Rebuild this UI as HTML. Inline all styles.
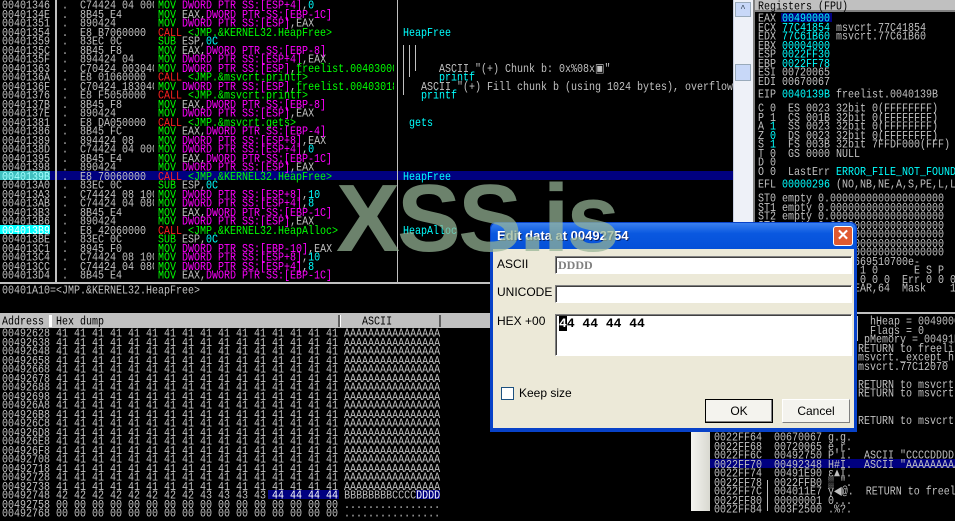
<!DOCTYPE html>
<html><head><meta charset="utf-8"><style>
*{margin:0;padding:0;box-sizing:border-box}
body{width:955px;height:511px;background:#000;overflow:hidden;position:relative;font-family:"Liberation Mono",monospace;font-size:10px;color:#c0c0c0}
pre{position:absolute;font-family:"Liberation Mono",monospace;font-size:10px;line-height:7.5px;padding-top:2px;white-space:pre;transform:scaleY(1.2);transform-origin:0 0}
.g{color:#00ff00}.m{color:#ff00ff}.r{color:#ff2020}.c{color:#00ffff}.w{color:#c0c0c0}
.abs{position:absolute}
.vl{position:absolute;background:#c0c0c0;width:2px}
.sans{font-family:"Liberation Sans",sans-serif}
</style></head><body>

<!-- disassembly -->
<div class="abs" style="left:0;top:171px;width:735px;height:9px;background:#000080"></div>
<div class="abs" style="left:0;top:171px;width:50px;height:9px;background:#40c0c0"></div>
<div class="abs" style="left:0;top:225px;width:50px;height:9px;background:#00ffff"></div>
<div class="vl" style="left:55px;top:0;height:282px"></div>
<div class="vl" style="left:397px;top:0;height:282px;width:1px"></div>
<div class="vl" style="left:403px;top:45px;height:50px;width:1px"></div>
<div class="vl" style="left:409px;top:45px;height:32px;width:1px"></div>
<div class="vl" style="left:415px;top:45px;height:26px;width:1px"></div>
<pre style="left:2px;top:0">00401346
0040134E
00401351
00401354
00401359
0040135C
0040135F
00401363
0040136A
0040136F
00401376
0040137B
0040137E
00401381
00401386
00401389
0040138D
00401395
00401398
<span style="color:#a0ffff">0040139B</span>
004013A0
004013A3
004013AB
004013B3
004013B6
<span style="color:#fff">004013B9</span>
004013BE
004013C1
004013C4
004013CC
004013D4</pre>
<pre style="left:62px;top:0;width:92px;overflow:hidden">.  C74424 04 0000
.  8B45 E4
.  890424
.  E8 B7060000
.  83EC 0C
.  8B45 F8
.  894424 04
.  C70424 003040
.  E8 01060000
.  C70424 183040
.  E8 F5050000
.  8B45 F8
.  890424
.  E8 DA050000
.  8B45 FC
.  894424 08
.  C74424 04 0000
.  8B45 E4
.  890424
.  E8 70060000
.  83EC 0C
.  C74424 08 1000
.  C74424 04 0800
.  8B45 E4
.  890424
.  E8 42060000
.  83EC 0C
.  8945 F0
.  C74424 08 1000
.  C74424 04 0800
.  8B45 E4</pre>
<pre style="left:158px;top:0;width:236px;overflow:hidden"><span class="g">MOV</span> <span class="m">DWORD PTR SS:[ESP+4]</span>,<span class="c">0</span>
<span class="g">MOV</span> EAX,<span class="m">DWORD PTR SS:[EBP-1C]</span>
<span class="g">MOV</span> <span class="m">DWORD PTR SS:[ESP]</span>,EAX
<span class="r">CALL</span> <span class="g">&lt;JMP.&amp;KERNEL32.HeapFree&gt;</span>
<span class="g">SUB</span> ESP,<span class="c">0C</span>
<span class="g">MOV</span> EAX,<span class="m">DWORD PTR SS:[EBP-8]</span>
<span class="g">MOV</span> <span class="m">DWORD PTR SS:[ESP+4]</span>,EAX
<span class="g">MOV</span> <span class="m">DWORD PTR SS:[ESP]</span>,<span class="g">freelist.00403000</span>
<span class="r">CALL</span> <span class="g">&lt;JMP.&amp;msvcrt.printf&gt;</span>
<span class="g">MOV</span> <span class="m">DWORD PTR SS:[ESP]</span>,<span class="g">freelist.00403018</span>
<span class="r">CALL</span> <span class="g">&lt;JMP.&amp;msvcrt.printf&gt;</span>
<span class="g">MOV</span> EAX,<span class="m">DWORD PTR SS:[EBP-8]</span>
<span class="g">MOV</span> <span class="m">DWORD PTR SS:[ESP]</span>,EAX
<span class="r">CALL</span> <span class="g">&lt;JMP.&amp;msvcrt.gets&gt;</span>
<span class="g">MOV</span> EAX,<span class="m">DWORD PTR SS:[EBP-4]</span>
<span class="g">MOV</span> <span class="m">DWORD PTR SS:[ESP+8]</span>,EAX
<span class="g">MOV</span> <span class="m">DWORD PTR SS:[ESP+4]</span>,<span class="c">0</span>
<span class="g">MOV</span> EAX,<span class="m">DWORD PTR SS:[EBP-1C]</span>
<span class="g">MOV</span> <span class="m">DWORD PTR SS:[ESP]</span>,EAX
<span class="r">CALL</span> <span class="g">&lt;JMP.&amp;KERNEL32.HeapFree&gt;</span>
<span class="g">SUB</span> ESP,<span class="c">0C</span>
<span class="g">MOV</span> <span class="m">DWORD PTR SS:[ESP+8]</span>,<span class="c">10</span>
<span class="g">MOV</span> <span class="m">DWORD PTR SS:[ESP+4]</span>,<span class="c">8</span>
<span class="g">MOV</span> EAX,<span class="m">DWORD PTR SS:[EBP-1C]</span>
<span class="g">MOV</span> <span class="m">DWORD PTR SS:[ESP]</span>,EAX
<span class="r">CALL</span> <span class="g">&lt;JMP.&amp;KERNEL32.HeapAlloc&gt;</span>
<span class="g">SUB</span> ESP,<span class="c">0C</span>
<span class="g">MOV</span> <span class="m">DWORD PTR SS:[EBP-10]</span>,EAX
<span class="g">MOV</span> <span class="m">DWORD PTR SS:[ESP+8]</span>,<span class="c">10</span>
<span class="g">MOV</span> <span class="m">DWORD PTR SS:[ESP+4]</span>,<span class="c">8</span>
<span class="g">MOV</span> EAX,<span class="m">DWORD PTR SS:[EBP-1C]</span></pre>
<pre style="left:403px;top:0;width:330px;overflow:hidden">
 
 
 
<span class="c">HeapFree</span>
 
 
 
      ASCII "(+) Chunk b: 0x%08x&#9635;"
      <span class="c">printf</span>
   ASCII "(+) Fill chunk b (using 1024 bytes), overflowing
   <span class="c">printf</span>
 
 
 <span class="c">gets</span>
 
 
 
 
 
<span class="c">HeapFree</span>
 
 
 
 
 
<span class="c">HeapAlloc</span></pre>
<!-- disasm scrollbar -->
<div class="abs" style="left:733px;top:0;width:20px;height:282px;background:#eef1f8;border-left:1px solid #c8cfe0"></div>
<div class="abs" style="left:735px;top:2px;width:16px;height:15px;background:#c8d8f8;border:1px solid #9ab;color:#345;font-size:9px;text-align:center;line-height:12px">&#94;</div>
<div class="abs" style="left:735px;top:64px;width:16px;height:17px;background:#c8d8f8;border:1px solid #9ab"></div>
<div class="abs" style="left:753px;top:0;width:2px;height:282px;background:#808080"></div>

<!-- info line -->
<div class="abs" style="left:0;top:282px;width:735px;height:2px;background:#c0c0c0"></div>
<pre style="left:2px;top:285px">00401A10=&lt;JMP.&amp;KERNEL32.HeapFree&gt;</pre>

<!-- dump -->
<div class="abs" style="left:0;top:313px;width:490px;height:2px;background:#c0c0c0"></div>
<div class="abs" style="left:0;top:315px;width:490px;height:13px;background:#c0c0c0"></div>
<div class="abs" style="left:0;top:315px;width:51px;height:12px;border-right:2px solid #fff;"></div>
<div class="abs" style="left:51px;top:315px;width:289px;height:12px;border-left:1px solid #fff;border-right:2px solid #606060"></div>
<div class="abs" style="left:340px;top:315px;width:101px;height:12px;border-left:1px solid #fff;border-right:2px solid #606060"></div>
<pre style="left:2px;top:316px;color:#000">Address  Hex dump                                           ASCII</pre>
<div class="abs" style="left:268px;top:490px;width:71px;height:9px;background:#000080"></div>
<div class="abs" style="left:416px;top:490px;width:24px;height:9px;background:#000080"></div>
<pre style="left:2px;top:328px">00492628 41 41 41 41 41 41 41 41 41 41 41 41 41 41 41 41 AAAAAAAAAAAAAAAA
00492638 41 41 41 41 41 41 41 41 41 41 41 41 41 41 41 41 AAAAAAAAAAAAAAAA
00492648 41 41 41 41 41 41 41 41 41 41 41 41 41 41 41 41 AAAAAAAAAAAAAAAA
00492658 41 41 41 41 41 41 41 41 41 41 41 41 41 41 41 41 AAAAAAAAAAAAAAAA
00492668 41 41 41 41 41 41 41 41 41 41 41 41 41 41 41 41 AAAAAAAAAAAAAAAA
00492678 41 41 41 41 41 41 41 41 41 41 41 41 41 41 41 41 AAAAAAAAAAAAAAAA
00492688 41 41 41 41 41 41 41 41 41 41 41 41 41 41 41 41 AAAAAAAAAAAAAAAA
00492698 41 41 41 41 41 41 41 41 41 41 41 41 41 41 41 41 AAAAAAAAAAAAAAAA
004926A8 41 41 41 41 41 41 41 41 41 41 41 41 41 41 41 41 AAAAAAAAAAAAAAAA
004926B8 41 41 41 41 41 41 41 41 41 41 41 41 41 41 41 41 AAAAAAAAAAAAAAAA
004926C8 41 41 41 41 41 41 41 41 41 41 41 41 41 41 41 41 AAAAAAAAAAAAAAAA
004926D8 41 41 41 41 41 41 41 41 41 41 41 41 41 41 41 41 AAAAAAAAAAAAAAAA
004926E8 41 41 41 41 41 41 41 41 41 41 41 41 41 41 41 41 AAAAAAAAAAAAAAAA
004926F8 41 41 41 41 41 41 41 41 41 41 41 41 41 41 41 41 AAAAAAAAAAAAAAAA
00492708 41 41 41 41 41 41 41 41 41 41 41 41 41 41 41 41 AAAAAAAAAAAAAAAA
00492718 41 41 41 41 41 41 41 41 41 41 41 41 41 41 41 41 AAAAAAAAAAAAAAAA
00492728 41 41 41 41 41 41 41 41 41 41 41 41 41 41 41 41 AAAAAAAAAAAAAAAA
00492738 41 41 41 41 41 41 41 41 41 41 41 41 41 41 41 41 AAAAAAAAAAAAAAAA
00492748 42 42 42 42 42 42 42 42 43 43 43 43 <span style="color:#fff">44 44 44 44</span> BBBBBBBBCCCC<span style="color:#fff">DDDD</span>
00492758 00 00 00 00 00 00 00 00 00 00 00 00 00 00 00 00 ................
00492768 00 00 00 00 00 00 00 00 00 00 00 00 00 00 00 00 ................</pre>

<!-- registers -->
<div class="abs" style="left:755px;top:0;width:200px;height:12px;background:#c0c0c0;border-bottom:2px solid #808080"></div>
<pre style="left:758px;top:1px;color:#000">Registers (FPU)</pre>
<div class="abs" style="left:781px;top:13px;width:51px;height:9px;background:#000080"></div>
<pre style="left:758px;top:13px">EAX <span class="c">00490000</span>
ECX <span class="c">77C41854</span> msvcrt.77C41854
EDX <span class="c">77C61B60</span> msvcrt.77C61B60
EBX <span class="c">00004000</span>
ESP <span class="c">0022FF30</span>
EBP <span class="c">0022FF78</span>
ESI 00720065
EDI 00670067</pre>
<pre style="left:758px;top:89px">EIP <span class="c">0040139B</span> freelist.0040139B</pre>
<pre style="left:758px;top:103px">C 0  ES 0023 32bit 0(FFFFFFFF)
P 1  CS 001B 32bit 0(FFFFFFFF)
A <span class="c">1</span>  SS 0023 32bit 0(FFFFFFFF)
Z <span class="c">0</span>  DS 0023 32bit 0(FFFFFFFF)
S <span class="c">1</span>  FS 003B 32bit 7FFDF000(FFF)
T 0  GS 0000 NULL
D 0
O 0  LastErr <span class="c">ERROR_FILE_NOT_FOUND</span></pre>
<pre style="left:758px;top:179px">EFL <span class="c">00000296</span> (NO,NB,NE,A,S,PE,L,LE)</pre>
<pre style="left:758px;top:193px">ST0 empty 0.0000000000000000000
ST1 empty 0.0000000000000000000
ST2 empty 0.0000000000000000000
ST3 empty 0.0000000000000000000
ST4 empty 0.0000000000000000000
ST5 empty 0.0000000000000000000
ST6 empty 0.0000000000000000000
ST7 empty 6.7516669510700e-
             3 2 1 0      E S P
FST 0000  Cond 0 0 0 0  Err 0 0 0
FCW 037F  Prec NEAR,64  Mask    1</pre>

<!-- stack / comments -->
<div class="abs" style="left:755px;top:312px;width:200px;height:2px;background:#c0c0c0"></div>
<div class="vl" style="left:857px;top:316px;height:25px;width:1px"></div>
<pre style="left:858px;top:316px">  hHeap = 00490000
  Flags = 0
 pMemory = 00491E90
RETURN to freelist
msvcrt._except_h.
msvcrt.77C12070
 
RETURN to msvcrt
RETURN to msvcrt
 
 
RETURN to msvcrt</pre>
<div class="abs" style="left:691px;top:431px;width:19px;height:80px;background:linear-gradient(90deg,#f4f4f0,#d8d8d0)"></div>
<div class="abs" style="left:710px;top:459px;width:245px;height:9px;background:#000080"></div>
<div class="vl" style="left:767px;top:480px;height:31px;width:1px"></div>
<pre style="left:714px;top:432px">0022FF64  00670067 g.g.
0022FF68  00720065 e.r.
0022FF6C  00492750 P'I.  ASCII "CCCCDDDD"
0022FF70  00492348 H#I.  ASCII "AAAAAAAAAAAA
0022FF74  00491E90 &#949;&#9650;I.
0022FF78  0022FFB0 &#9618; ".
0022FF7C  004011E7 &#947;&#9664;@.  RETURN to freelist
0022FF80  00000001 0...
0022FF84  003F2500 .%?.</pre>

<!-- dialog -->
<div class="abs" style="left:490px;top:222px;width:367px;height:210px;background:#0842c8;border-radius:6px 6px 0 0"></div>
<div class="abs" style="left:491px;top:223px;width:365px;height:26px;background:linear-gradient(180deg,#3a80f0,#0a58e0 40%,#0550d8);border-radius:6px 6px 0 0"></div>
<div class="abs sans" style="left:497px;top:228px;font-size:13px;font-weight:bold;color:#fff;text-shadow:1px 1px #0a246a">Edit data at 00492754</div>
<div class="abs" style="left:833px;top:226px;width:20px;height:20px;background:#e05a30;border:1px solid #fff;border-radius:3px;color:#fff;font:bold 15px 'Liberation Sans',sans-serif;text-align:center;line-height:18px">&#10005;</div>
<div class="abs" style="left:493px;top:249px;width:361px;height:179px;background:#ece9d8"></div>
<div class="abs sans" style="left:497px;top:257px;font-size:12px;color:#000">ASCII</div>
<div class="abs sans" style="left:497px;top:285px;font-size:12px;color:#000">UNICODE</div>
<div class="abs sans" style="left:497px;top:314px;font-size:12px;color:#000">HEX +00</div>
<div class="abs" style="left:555px;top:256px;width:297px;height:18px;background:#fff;border:1px solid;border-color:#808080 #fff #fff #808080;box-shadow:inset 1px 1px #404040"></div>
<div class="abs" style="left:558px;top:258px;font:bold 12px 'Liberation Serif',serif;color:#808080">DDDD</div>
<div class="abs" style="left:555px;top:285px;width:297px;height:18px;background:#fff;border:1px solid;border-color:#808080 #fff #fff #808080;box-shadow:inset 1px 1px #404040"></div>
<div class="abs" style="left:555px;top:314px;width:297px;height:42px;background:#fff;border:1px solid;border-color:#808080 #fff #fff #808080;box-shadow:inset 1px 1px #404040"></div>
<div class="abs" style="left:559px;top:316px;font:bold 13px 'Liberation Mono',monospace;color:#000"><span style="background:#000;color:#fff">4</span>4 44 44 44</div>
<div class="abs" style="left:501px;top:387px;width:13px;height:13px;background:#fff;border:1px solid #1c5180"></div>
<div class="abs sans" style="left:519px;top:386px;font-size:12px;color:#000">Keep size</div>
<div class="abs sans" style="left:705px;top:399px;width:68px;height:24px;background:#f4f3ee;border:1px solid #000;box-shadow:inset -1px -1px #808080;font-size:12px;text-align:center;line-height:22px;color:#000">OK</div>
<div class="abs sans" style="left:782px;top:399px;width:68px;height:24px;background:#f4f3ee;border:1px solid;border-color:#fff #808080 #808080 #fff;font-size:12px;text-align:center;line-height:22px;color:#000">Cancel</div>

<!-- watermark -->
<div class="abs sans" style="left:336px;top:171px;font-size:96px;font-weight:bold;color:rgba(150,180,150,0.72);letter-spacing:-3px;line-height:96px;white-space:nowrap">XSS.is</div>
</body></html>
